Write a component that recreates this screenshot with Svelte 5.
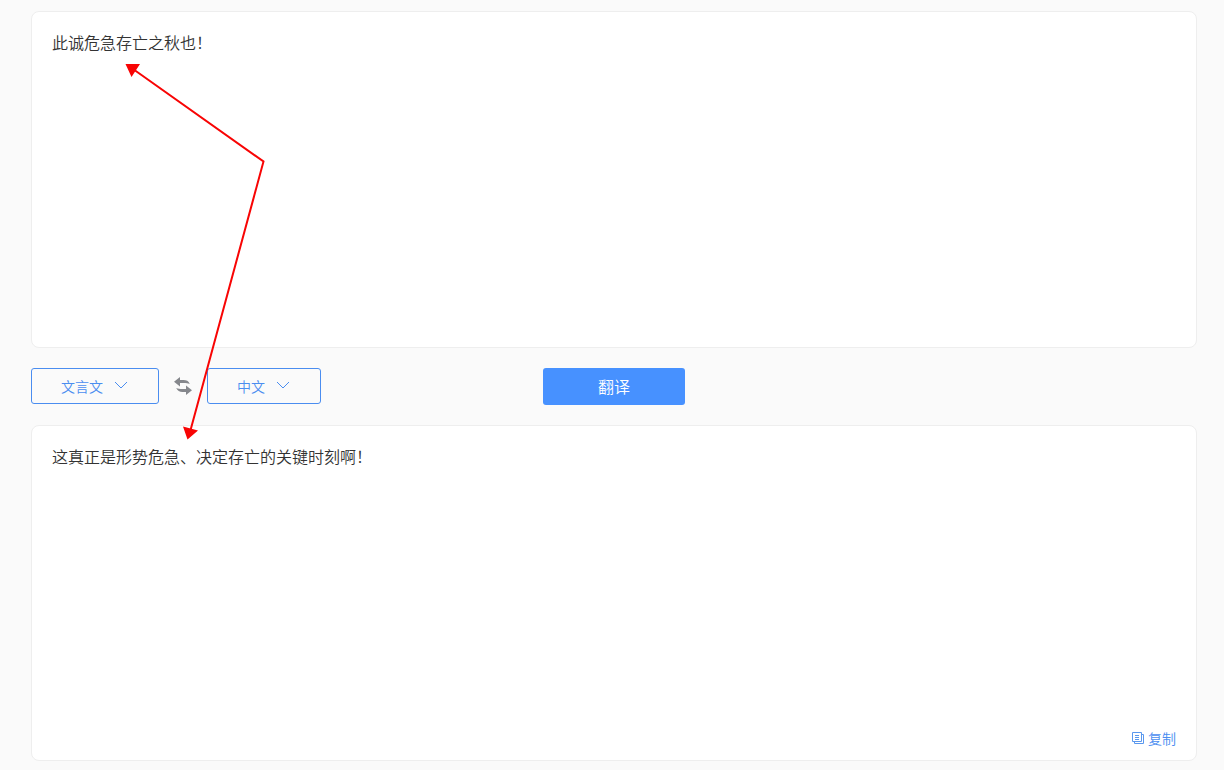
<script>
  let source = $state('此诚危急存亡之秋也！');
  let from = $state('文言文');
  let to = $state('中文');
  const result = '这真正是形势危急、决定存亡的关键时刻啊！';
</script>

<main class="translator">
  <textarea class="panel" aria-label="原文" spellcheck="false" bind:value={source}></textarea>

  <div class="toolbar">
    <div class="languages">
      <div class="picker">
        <select aria-label="源语言" bind:value={from}>
          <option>文言文</option>
        </select>
        <svg class="chevron" viewBox="0 0 14 8" aria-hidden="true"><path d="M1 1l6 6 6-6" /></svg>
      </div>
      <button class="swap" type="button" aria-label="交换语言">
        <svg viewBox="0 0 20 20" aria-hidden="true">
          <path d="M1 5.700L7 1v3.100h3.500c3 0 5 .9 6.300 3.900-2-.9-3.500-1-6.300-1H7v3.400z" />
          <path d="M19 14.300L13 19v-3.100H9.500c-3 0-5-.9-6.300-3.900 2 .9 3.500 1 6.300 1h3.500V9.600z" />
        </svg>
      </button>
      <div class="picker">
        <select aria-label="目标语言" bind:value={to}>
          <option>中文</option>
        </select>
        <svg class="chevron" viewBox="0 0 14 8" aria-hidden="true"><path d="M1 1l6 6 6-6" /></svg>
      </div>
    </div>
    <button class="translate" type="button">翻译</button>
  </div>

  <section class="panel result">
    <p>{result}</p>
    <button class="copy" type="button">
      <svg viewBox="0 0 12 12" aria-hidden="true">
        <path d="M.5.5h9v9h-9zM9.500 2.500h2v9h-9v-2M3 3.500h4M3 5.500h4M3 7.500h4" />
      </svg>
      复制
    </button>
  </section>

  <svg class="pointer" width="280" height="450" aria-hidden="true">
    <path class="line" d="M133 69L263.500 161.500 190 432" />
    <path class="head" d="M125.500 64h14.500l-8.500 13zM183 426.500l15 4-10.500 9z" />
  </svg>
</main>

<style>
  :global(body) {
    margin: 0;
    background: #fafafa;
  }

  .translator,
  textarea,
  select,
  button {
    font-family: "Noto Sans CJK SC", sans-serif;
    font-weight: 350;
  }

  .translator {
    position: relative;
    box-sizing: border-box;
    min-height: 100vh;
    padding: 11px 27px 9px 31px;
    display: flex;
    flex-direction: column;
    gap: 20px;
  }

  .panel {
    flex: 1 1 0;
    box-sizing: border-box;
    width: 100%;
    min-height: 160px;
    padding: 18px 20px 12px;
    border: 1px solid #eee;
    border-radius: 8px;
    background: #fff;
    color: #333;
    font-size: 16px;
    line-height: 24px;
  }

  textarea {
    display: block;
    margin: 0;
    resize: none;
    outline: none;
  }

  .toolbar {
    display: grid;
    grid-template-columns: 1fr auto 1fr;
    align-items: start;
  }

  .languages {
    display: flex;
    align-items: center;
  }

  .picker {
    position: relative;
    display: flex;
  }

  select {
    appearance: none;
    box-sizing: border-box;
    height: 36px;
    margin: 0;
    padding: 0 55px 0 29px;
    border: 1px solid #4a8df0;
    border-radius: 3px;
    background: transparent;
    color: #4a8df0;
    font-size: 14px;
    line-height: 20px;
  }

  .chevron {
    position: absolute;
    top: 13px;
    right: 31px;
    width: 14px;
    height: 8px;
    fill: none;
    stroke: #4a8df0;
    pointer-events: none;
  }

  button {
    margin: 0;
    padding: 0;
    border: 0;
    background: none;
    cursor: pointer;
  }

  .swap {
    display: flex;
    justify-content: center;
    width: 48px;
  }

  .swap svg {
    width: 20px;
    height: 20px;
    fill: #85878c;
  }

  .translate {
    width: 142px;
    height: 37px;
    border-radius: 3px;
    background: #4791ff;
    color: #fff;
    font-size: 16px;
  }

  .result {
    display: flex;
    flex-direction: column;
    justify-content: space-between;
  }

  p {
    margin: 0;
  }

  .copy {
    display: flex;
    align-items: center;
    align-self: flex-end;
    gap: 4px;
    color: #4a8df0;
    font-size: 14px;
    line-height: 20px;
  }

  .copy svg {
    width: 12px;
    height: 12px;
    fill: none;
    stroke: #5a98ee;
  }

  .pointer {
    position: absolute;
    top: 0;
    left: 0;
    pointer-events: none;
  }

  .line {
    fill: none;
    stroke: #f80404;
    stroke-width: 2;
  }

  .head {
    fill: #f80404;
  }
</style>
